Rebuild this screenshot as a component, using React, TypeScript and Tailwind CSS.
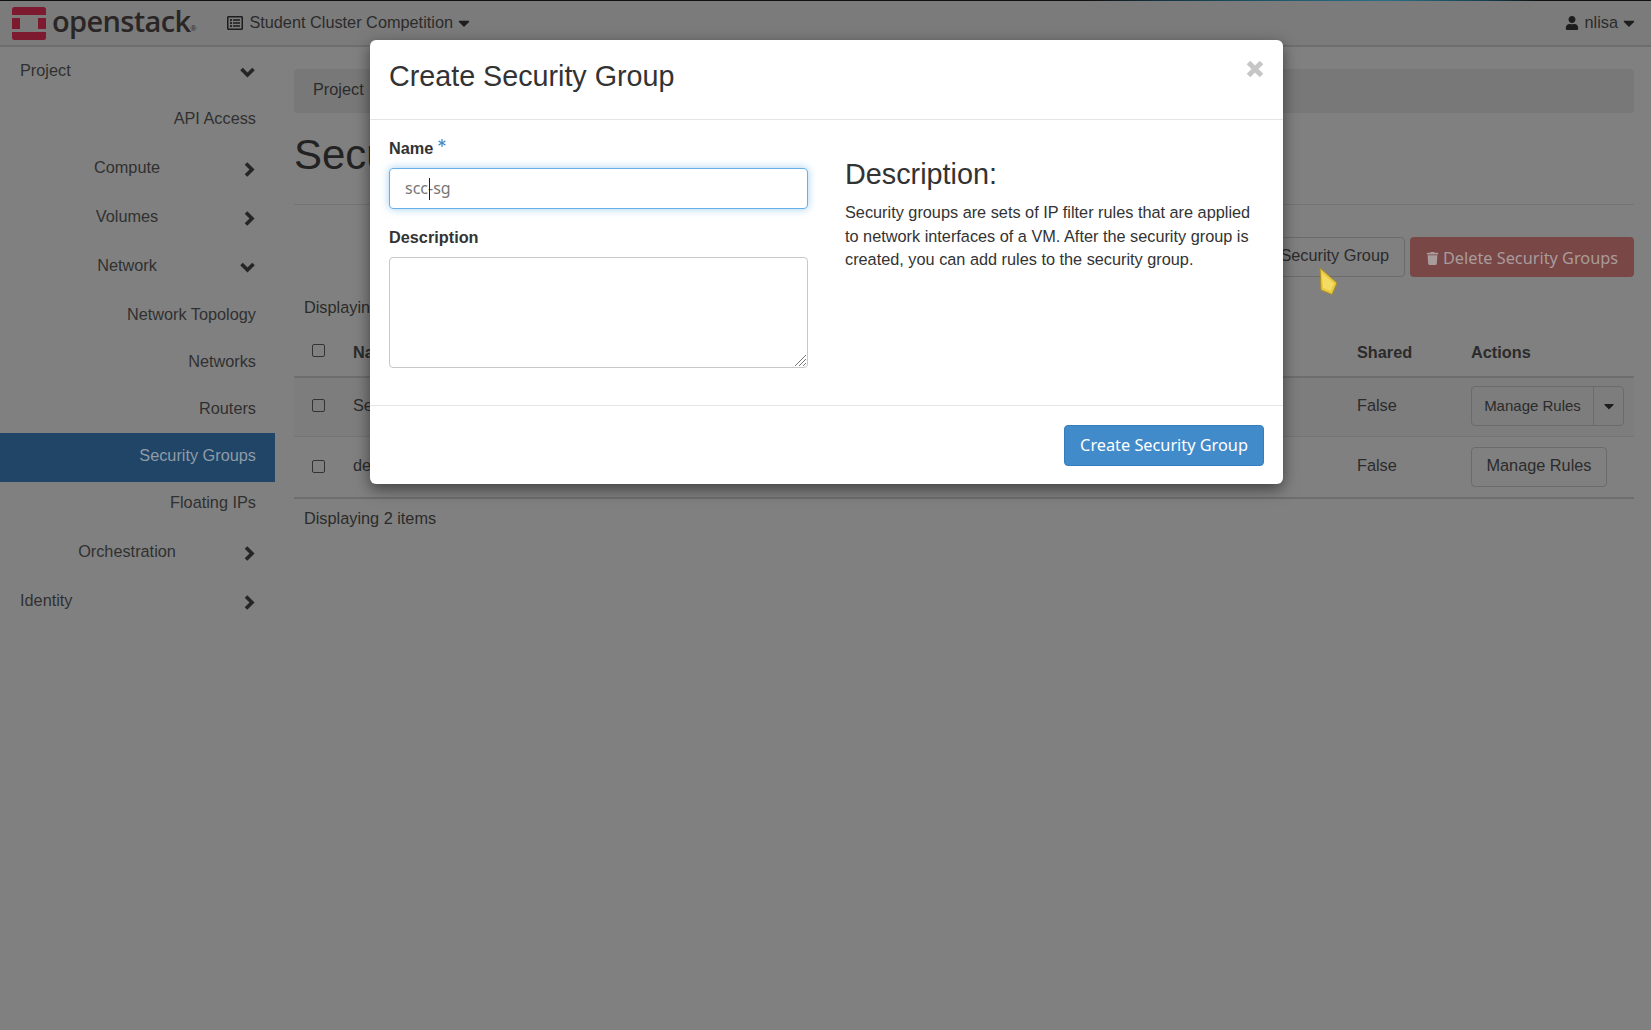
import React from "react";
import { FaUser, FaTrash, FaCaretDown, FaAsterisk, FaRegListAlt } from "react-icons/fa";

function Chevron({ down }: { down?: boolean }) {
  return down ? (
    <svg width="15" height="11" viewBox="0 0 15 11" className="mt-[5px] block">
      <polyline points="1.5,2 7.5,8 13.5,2" fill="none" stroke="#252525" strokeWidth="3.6" />
    </svg>
  ) : (
    <svg width="11" height="15" viewBox="0 0 11 15" className="mt-[5px] block">
      <polyline points="2,1.5 8,7.5 2,13.5" fill="none" stroke="#252525" strokeWidth="3.6" />
    </svg>
  );
}

function Top({ label, down }: { label: string; down?: boolean }) {
  return (
    <div className="flex h-[49px] items-center pb-[3px] pl-[17px]">
      <span className="w-[220px] text-center text-[#303030]">{label}</span>
      <span className={down ? "ml-[3px]" : "ml-[7px]"}><Chevron down={down} /></span>
    </div>
  );
}

function Edge({ label, down, pad }: { label: string; down?: boolean; pad: string }) {
  return (
    <div className={`flex h-[49px] items-center justify-between pl-[20px] pr-[20px] ${pad}`}>
      <span className="text-[#303030]">{label}</span>
      <Chevron down={down} />
    </div>
  );
}

function Sub({ label, box = "h-[47px]" }: { label: string; box?: string }) {
  return <div className={`flex items-center justify-end pr-[19px] text-[#303030] ${box}`}>{label}</div>;
}

function Box() {
  return <span className="block h-[13px] w-[13px] rounded-[2px] border-[1.5px] border-[#333]" />;
}

export default function App() {
  return (
    <div className="relative h-[1030px] w-[1651px] overflow-hidden bg-[#808080] font-['Liberation_Sans',sans-serif] text-[16.3px] text-[#2b2b2b]">
      <div className="h-[1px] bg-[linear-gradient(90deg,#111_0%,#111_66%,#13333f_70%,#1f5a6e_78%,#2a6f86_84%,#15404f_90%,#111_93%,#111_100%)]" />
      <header className="flex h-[46px] items-center border-b-2 border-[#6e6e6e] bg-[#7b7b7b]">
        <svg width="34" height="33" viewBox="0 0 34 33" className="ml-[12px] mt-[1px]">
          <rect width="34" height="33" rx="2.5" fill="#7d1a30" />
          <rect x="8" y="8" width="18" height="17" fill="#7b7b7b" />
          <rect x="0" y="8" width="8" height="3" fill="#7b7b7b" />
          <rect x="26" y="8" width="8" height="3" fill="#7b7b7b" />
          <rect x="0" y="22" width="8" height="3" fill="#7b7b7b" />
          <rect x="26" y="22" width="8" height="3" fill="#7b7b7b" />
        </svg>
        <span className="ml-[6px] mt-[-4px] font-['Open_Sans',sans-serif] text-[29px] font-semibold tracking-[-0.65px] text-[#2a2626]">openstack</span>
        <span className="mb-[-12px] text-[8px] text-[#2a2626]">®</span>
        <FaRegListAlt className="ml-[31px] text-[16px] text-[#1d1d1d]" />
        <span className="ml-[6px] mt-[-1px]">Student Cluster Competition</span>
        <FaCaretDown className="ml-[2px] text-[18px] text-[#1d1d1d]" />
        <div className="ml-auto mr-[13px] flex items-center">
          <FaUser className="text-[14px] text-[#1d1d1d]" />
          <span className="ml-[6px] mt-[-1px]">nlisa</span>
          <FaCaretDown className="ml-[2px] text-[18px] text-[#1d1d1d]" />
        </div>
      </header>
      <div className="flex">
        <aside className="w-[275px] shrink-0 pt-[1px]">
          <Edge label="Project" down pad="pb-[5px]" />
          <Sub label="API Access" box="h-[47px] pb-[4px]" />
          <Top label="Compute" />
          <Top label="Volumes" />
          <Top label="Network" down />
          <Sub label="Network Topology" />
          <Sub label="Networks" />
          <Sub label="Routers" box="h-[48px] pb-[1px]" />
          <div className="flex h-[49px] items-center justify-end bg-[#204566] pb-[4px] pr-[19px] text-[#8f9ba6]">Security Groups</div>
          <Sub label="Floating IPs" box="h-[46px] pb-[5px]" />
          <Top label="Orchestration" />
          <Edge label="Identity" pad="pb-[3px]" />
        </aside>
        <main className="ml-[19px] mr-[17px] flex-1 pt-[22px]">
          <div className="flex h-[44px] items-center rounded-[4px] bg-[#787878] pb-[4px] pl-[19px]">
            <span>Project</span>
            <span className="mx-[10px]">/</span>
            <span>Network</span>
            <span className="mx-[10px]">/</span>
            <span>Security Groups</span>
          </div>
          <h1 className="mt-[12px] h-[80px] border-b border-[#747474] text-[42px] leading-[59px] text-[#222]">Security Groups</h1>
          <div className="mt-[32px] flex justify-end gap-[5px]">
            <button className="h-[40px] rounded-[4px] border border-[#6b6b6b] px-[15px] pb-[4px]">Create Security Group</button>
            <button className="flex h-[40px] w-[224px] items-center justify-center rounded-[4px] bg-[#794746] pt-[3px] font-['Noto_Sans',sans-serif] text-[#a89c9c]">
              <FaTrash className="mr-[4px] text-[13px]" />Delete Security Groups
            </button>
          </div>
          <div className="mt-[18px] pl-[10px]">Displaying 2 items</div>
          <div className="mt-[20px] flex h-[39px] items-center border-b-2 border-[#6e6e6e] pb-[12px] font-bold">
            <span className="ml-[18px] mt-[-2px] w-[41px]"><Box /></span>
            <span>Name</span>
            <span className="ml-auto w-[114px]">Shared</span>
            <span className="w-[163px]">Actions</span>
          </div>
          <div className="flex h-[59px] items-center border-b border-[#747474] bg-[#7d7d7d] pb-[5px]">
            <span className="ml-[18px] mt-[2px] w-[41px]"><Box /></span>
            <span>Security</span>
            <span className="ml-auto w-[114px]">False</span>
            <span className="mt-[2px] flex w-[163px]">
              <span className="flex h-[40px] items-center rounded-[4px] border border-[#6b6b6b]">
                <span className="flex h-full w-[122px] items-center justify-center border-r border-[#6b6b6b] text-[15px]">Manage Rules</span>
                <span className="flex w-[29px] justify-center"><FaCaretDown className="text-[16px] text-[#1d1d1d]" /></span>
              </span>
            </span>
          </div>
          <div className="flex h-[62px] items-center border-b-2 border-[#6e6e6e] pb-[4px]">
            <span className="ml-[18px] mt-[2px] w-[41px]"><Box /></span>
            <span>default</span>
            <span className="ml-auto w-[114px]">False</span>
            <span className="mt-[4px] w-[163px]">
              <span className="flex h-[40px] w-[136px] items-center justify-center rounded-[4px] border border-[#6b6b6b] pb-[4px]">Manage Rules</span>
            </span>
          </div>
          <div className="mt-[7px] pl-[10px]">Displaying 2 items</div>
        </main>
      </div>

      <svg width="24" height="32" viewBox="0 0 24 32" className="absolute left-[1317px] top-[266px]">
        <path d="M3 2 L20 17 L15 28.5 L4 24 Z" fill="#e9c93f" stroke="#a98e2a" strokeWidth="1" strokeLinejoin="round" />
        <path d="M5 7 L17 17.5 L13.5 25 L6 22 Z" fill="#f4dc62" />
      </svg>

      <section className="absolute left-[370px] top-[40px] h-[444px] w-[913px] rounded-[6px] bg-white shadow-[0_5px_15px_rgba(0,0,0,0.5)]">
        <div className="flex h-[80px] items-start justify-between border-b border-[#e5e5e5] px-[19px]">
          <h2 className="pt-[18px] text-[28.7px] leading-[36px] text-[#333]">Create Security Group</h2>
          <svg width="18" height="18" viewBox="0 0 18 18" className="mt-[20px]">
            <path d="M2.5 2.5 L15.5 15.5 M15.5 2.5 L2.5 15.5" stroke="#c6c6c6" strokeWidth="5" />
          </svg>
        </div>
        <div className="flex h-[286px] border-b border-[#e5e5e5] px-[19px]">
          <div className="w-[419px] shrink-0">
            <label className="mt-[17px] flex items-start font-bold leading-[22px] text-[#333]">
              Name<FaAsterisk className="ml-[5px] mt-[2px] text-[8px] text-[#428bca]" />
            </label>
            <div className="relative mt-[9px] flex h-[41px] items-center rounded-[4px] border border-[#66afe9] pb-[1px] pl-[15px] font-['Noto_Sans',sans-serif] text-[16px] text-[#777] shadow-[0_0_8px_rgba(102,175,233,0.6)]">
              scc-sg
              <span className="absolute left-[39px] top-[9px] h-[22px] w-[1px] bg-[#222]" />
            </div>
            <label className="mt-[17px] block font-bold leading-[22px] text-[#333]">Description</label>
            <div className="relative mt-[9px] h-[111px] rounded-[4px] border-[1.5px] border-[#c8c8c8]">
              <svg width="13" height="13" viewBox="0 0 13 13" className="absolute bottom-0 right-0">
                <path d="M1 12 L12 1 M5 12 L12 5 M9 12 L12 9" stroke="#777" strokeWidth="1" />
              </svg>
            </div>
          </div>
          <div className="ml-[37px] flex-1 pr-[9px]">
            <h3 className="mt-[38px] text-[28.8px] leading-[33px] font-normal text-[#333]">Description:</h3>
            <p className="mt-[10px] leading-[23.6px] text-[#333]">
              Security groups are sets of IP filter rules that are applied to network interfaces of a VM. After the security group is created, you can add rules to the security group.
            </p>
          </div>
        </div>
        <div className="flex justify-end px-[19px] pt-[19px]">
          <button className="h-[41px] w-[200px] rounded-[4px] border border-[#357ebd] bg-[#428bca] font-['Noto_Sans',sans-serif] text-white">Create Security Group</button>
        </div>
      </section>
    </div>
  );
}
